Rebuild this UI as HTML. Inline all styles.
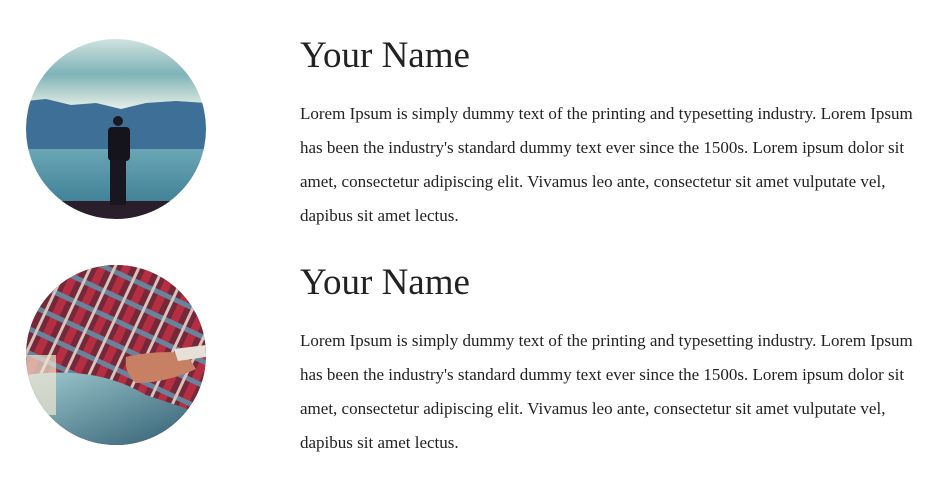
<!DOCTYPE html>
<html><head><meta charset="utf-8"><style>
html,body{margin:0;padding:0;background:#fff;width:952px;height:482px;overflow:hidden}
body{font-family:"Liberation Serif",serif;color:#222}
.av{position:absolute;left:26px;width:180px;height:180px}
.t{position:absolute;left:300px;width:620px}
h2{margin:0;font-weight:normal;font-size:37px;line-height:40px;color:#222}
p{margin:0;font-size:17px;line-height:34px;color:#222}
</style></head><body>
<svg class="av" style="top:39px" viewBox="0 0 180 180">
<defs><clipPath id="c1"><circle cx="90" cy="90" r="90"/></clipPath>
<linearGradient id="sky" x1="0" y1="0" x2="0" y2="1"><stop offset="0" stop-color="#cfe3df"/><stop offset="0.5" stop-color="#7fb3b8"/><stop offset="1" stop-color="#e8efe6"/></linearGradient>
<linearGradient id="sea" x1="0" y1="0" x2="0" y2="1"><stop offset="0" stop-color="#6aa6b5"/><stop offset="1" stop-color="#3d7f95"/></linearGradient></defs>
<g clip-path="url(#c1)">
<rect width="180" height="70" fill="url(#sky)"/>
<path d="M0 62 L20 60 L45 66 L70 64 L95 70 L120 64 L150 62 L180 64 L180 112 L0 112Z" fill="#3e6f96"/>
<rect y="110" width="180" height="58" fill="url(#sea)"/>
<rect y="162" width="180" height="20" fill="#2a1e2c"/>
<circle cx="92" cy="82" r="5" fill="#1a1820"/>
<rect x="82" y="88" width="22" height="34" rx="4" fill="#15141c"/>
<rect x="84" y="121" width="16" height="45" fill="#18161e"/>
</g></svg>
<svg class="av" style="top:265px" viewBox="0 0 180 180">
<defs><clipPath id="c2"><circle cx="90" cy="90" r="90"/></clipPath>
<pattern id="pl" width="22" height="22" patternUnits="userSpaceOnUse" patternTransform="rotate(25)">
<rect width="22" height="22" fill="#7a2a3a"/><rect width="8" height="22" fill="#c23044"/><rect y="10" width="22" height="5" fill="#6b8fa8"/><rect x="14" width="3" height="22" fill="#e5d6cc"/></pattern>
<linearGradient id="jn" x1="0" y1="0" x2="1" y2="1"><stop offset="0" stop-color="#9fcad0"/><stop offset="1" stop-color="#2d5a6e"/></linearGradient></defs>
<g clip-path="url(#c2)">
<rect width="180" height="180" fill="#4a1a2c"/>
<rect width="180" height="180" fill="url(#pl)" opacity="0.9"/>
<path d="M0 110 Q70 100 120 130 L180 150 L180 180 L0 180Z" fill="url(#jn)"/>
<rect x="0" y="90" width="30" height="60" fill="#f0e5d0" opacity="0.7"/>
<path d="M100 92 Q130 85 160 88 L170 104 Q140 118 110 118 Q98 108 100 92Z" fill="#c88064"/>
<path d="M148 84 L180 80 L180 92 L152 96Z" fill="#e6e0d8"/>
</g></svg>
<div class="t" style="top:36px"><h2>Your Name</h2>
<p style="margin-top:21px">Lorem Ipsum is simply dummy text of the printing and typesetting industry. Lorem Ipsum has been the industry's standard dummy text ever since the 1500s. Lorem ipsum dolor sit amet, consectetur adipiscing elit. Vivamus leo ante, consectetur sit amet vulputate vel, dapibus sit amet lectus.</p></div>
<div class="t" style="top:263px"><h2>Your Name</h2>
<p style="margin-top:21px">Lorem Ipsum is simply dummy text of the printing and typesetting industry. Lorem Ipsum has been the industry's standard dummy text ever since the 1500s. Lorem ipsum dolor sit amet, consectetur adipiscing elit. Vivamus leo ante, consectetur sit amet vulputate vel, dapibus sit amet lectus.</p></div>
</body></html>
